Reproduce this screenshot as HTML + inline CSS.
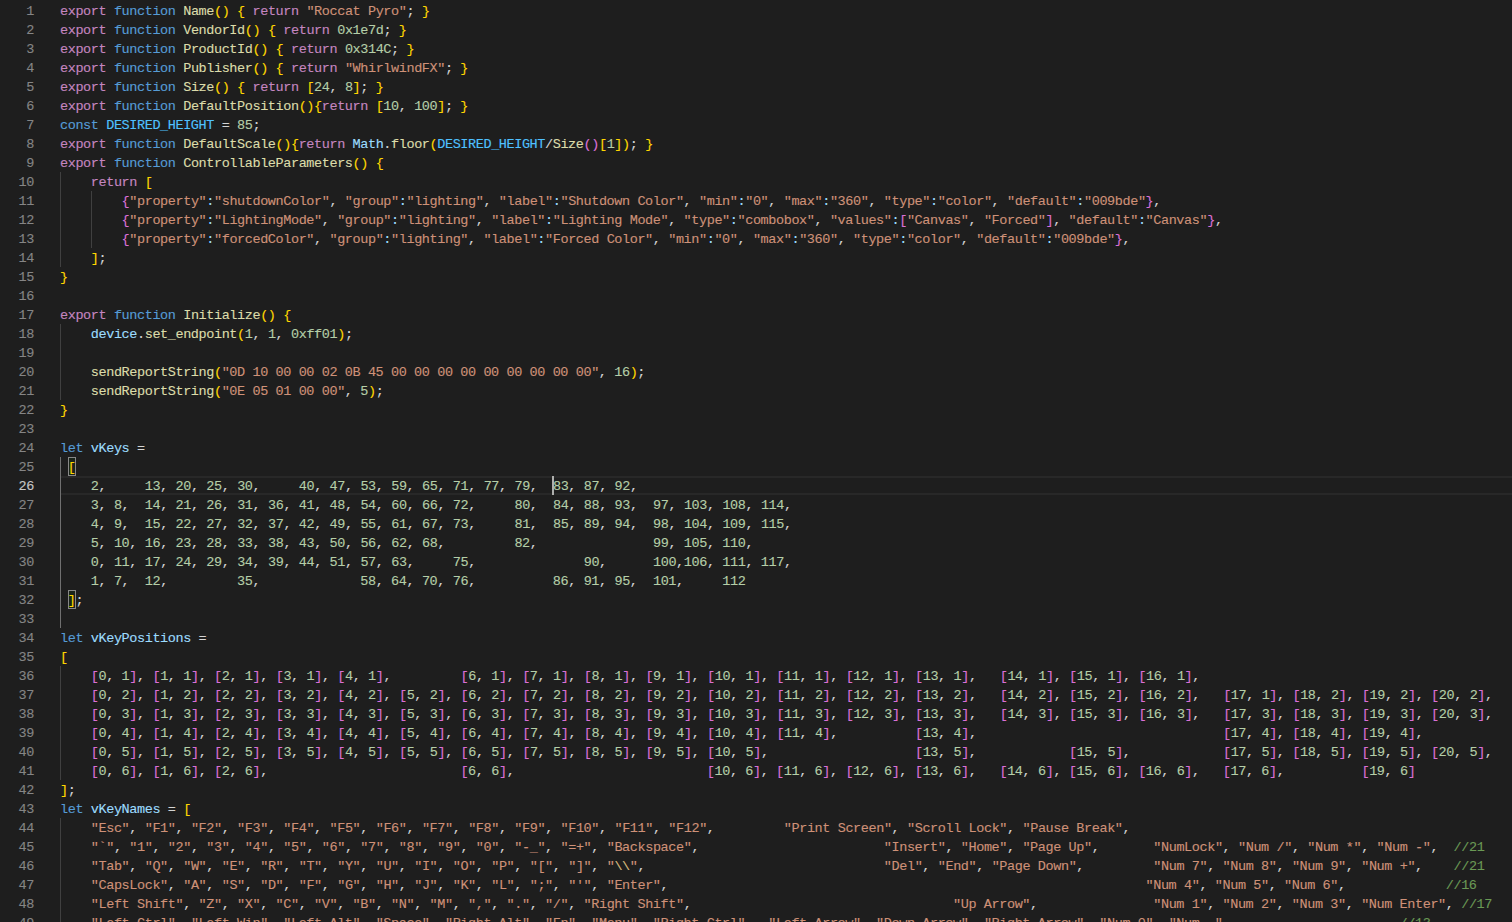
<!DOCTYPE html><html><head><meta charset="utf-8"><style>
*{margin:0;padding:0;box-sizing:border-box}
html,body{width:1512px;height:922px;overflow:hidden;background:#1e1e1e}
body{position:relative;font-family:"Liberation Mono",monospace}
.ln{position:absolute;left:0;width:34px;height:19px;text-align:right;color:#858585;font-size:13.5px;line-height:19px;letter-spacing:-0.404px;white-space:pre;-webkit-text-stroke:0.12px currentColor}
.ln.a{color:#c6c6c6}
.l{position:absolute;left:60px;height:19px;font-size:13.5px;line-height:19px;letter-spacing:-0.404px;white-space:pre;color:#d4d4d4;-webkit-text-stroke:0.12px currentColor}
i{font-style:normal}
.k{color:#c586c0}.s{color:#569cd6}.f{color:#dcdcaa}.t{color:#ce9178}.n{color:#b5cea8}
.v{color:#9cdcfe}.c{color:#4fc1ff}.p{color:#d4d4d4}.y{color:#ffd700}.o{color:#da70d6}.g{color:#6a9955}.e{color:#d7ba7d}
.gd{position:absolute;width:1px;background:#404040}
.gd.a{background:#707070}
.hl{position:absolute;left:61px;right:0;height:19px;border-top:2px solid #282828;border-bottom:2px solid #282828}
.bm{position:absolute;width:8px;height:19px;border:1px solid #888888;background:rgba(0,100,0,0.1)}
.cur{position:absolute;width:2px;height:19px;background:#aeafad}
</style></head><body>
<div class="hl" style="top:476px"></div>
<div class="gd" style="left:60px;top:172px;height:95px"></div>
<div class="gd" style="left:91px;top:191px;height:57px"></div>
<div class="gd" style="left:60px;top:324px;height:76px"></div>
<div class="gd a" style="left:60px;top:457px;height:171px"></div>
<div class="gd" style="left:60px;top:666px;height:114px"></div>
<div class="gd" style="left:60px;top:818px;height:114px"></div>
<div class="bm" style="left:68px;top:457px"></div>
<div class="bm" style="left:68px;top:590px"></div>
<div class="ln" style="top:1.80px">1</div>
<div class="l" style="top:1.80px"><i class="k">export</i> <i class="s">function</i> <i class="f">Name</i><i class="y">()</i> <i class="y">{</i> <i class="k">return</i> <i class="t">"Roccat Pyro"</i><i class="p">; </i><i class="y">}</i></div>
<div class="ln" style="top:20.80px">2</div>
<div class="l" style="top:20.80px"><i class="k">export</i> <i class="s">function</i> <i class="f">VendorId</i><i class="y">()</i> <i class="y">{</i> <i class="k">return</i> <i class="n">0x1e7d</i><i class="p">; </i><i class="y">}</i></div>
<div class="ln" style="top:39.80px">3</div>
<div class="l" style="top:39.80px"><i class="k">export</i> <i class="s">function</i> <i class="f">ProductId</i><i class="y">()</i> <i class="y">{</i> <i class="k">return</i> <i class="n">0x314C</i><i class="p">; </i><i class="y">}</i></div>
<div class="ln" style="top:58.80px">4</div>
<div class="l" style="top:58.80px"><i class="k">export</i> <i class="s">function</i> <i class="f">Publisher</i><i class="y">()</i> <i class="y">{</i> <i class="k">return</i> <i class="t">"WhirlwindFX"</i><i class="p">; </i><i class="y">}</i></div>
<div class="ln" style="top:77.80px">5</div>
<div class="l" style="top:77.80px"><i class="k">export</i> <i class="s">function</i> <i class="f">Size</i><i class="y">()</i> <i class="y">{</i> <i class="k">return</i> <i class="y">[</i><i class="n">24</i><i class="p">, </i><i class="n">8</i><i class="y">]</i><i class="p">; </i><i class="y">}</i></div>
<div class="ln" style="top:96.80px">6</div>
<div class="l" style="top:96.80px"><i class="k">export</i> <i class="s">function</i> <i class="f">DefaultPosition</i><i class="y">(){</i><i class="k">return</i> <i class="y">[</i><i class="n">10</i><i class="p">, </i><i class="n">100</i><i class="y">]</i><i class="p">; </i><i class="y">}</i></div>
<div class="ln" style="top:115.80px">7</div>
<div class="l" style="top:115.80px"><i class="s">const</i> <i class="c">DESIRED_HEIGHT</i><i class="p"> = </i><i class="n">85</i><i class="p">;</i></div>
<div class="ln" style="top:134.80px">8</div>
<div class="l" style="top:134.80px"><i class="k">export</i> <i class="s">function</i> <i class="f">DefaultScale</i><i class="y">(){</i><i class="k">return</i> <i class="v">Math</i><i class="p">.</i><i class="f">floor</i><i class="y">(</i><i class="c">DESIRED_HEIGHT</i><i class="p">/</i><i class="f">Size</i><i class="o">()</i><i class="y">[</i><i class="n">1</i><i class="y">])</i><i class="p">; </i><i class="y">}</i></div>
<div class="ln" style="top:153.80px">9</div>
<div class="l" style="top:153.80px"><i class="k">export</i> <i class="s">function</i> <i class="f">ControllableParameters</i><i class="y">()</i> <i class="y">{</i></div>
<div class="ln" style="top:172.80px">10</div>
<div class="l" style="top:172.80px">    <i class="k">return</i> <i class="y">[</i></div>
<div class="ln" style="top:191.80px">11</div>
<div class="l" style="top:191.80px">        <i class="o">{</i><i class="t">"property"</i><i class="v">:</i><i class="t">"shutdownColor"</i><i class="p">, </i><i class="t">"group"</i><i class="v">:</i><i class="t">"lighting"</i><i class="p">, </i><i class="t">"label"</i><i class="v">:</i><i class="t">"Shutdown Color"</i><i class="p">, </i><i class="t">"min"</i><i class="v">:</i><i class="t">"0"</i><i class="p">, </i><i class="t">"max"</i><i class="v">:</i><i class="t">"360"</i><i class="p">, </i><i class="t">"type"</i><i class="v">:</i><i class="t">"color"</i><i class="p">, </i><i class="t">"default"</i><i class="v">:</i><i class="t">"009bde"</i><i class="o">}</i><i class="p">,</i></div>
<div class="ln" style="top:210.80px">12</div>
<div class="l" style="top:210.80px">        <i class="o">{</i><i class="t">"property"</i><i class="v">:</i><i class="t">"LightingMode"</i><i class="p">, </i><i class="t">"group"</i><i class="v">:</i><i class="t">"lighting"</i><i class="p">, </i><i class="t">"label"</i><i class="v">:</i><i class="t">"Lighting Mode"</i><i class="p">, </i><i class="t">"type"</i><i class="v">:</i><i class="t">"combobox"</i><i class="p">, </i><i class="t">"values"</i><i class="v">:</i><i class="o">[</i><i class="t">"Canvas"</i><i class="p">, </i><i class="t">"Forced"</i><i class="o">]</i><i class="p">, </i><i class="t">"default"</i><i class="v">:</i><i class="t">"Canvas"</i><i class="o">}</i><i class="p">,</i></div>
<div class="ln" style="top:229.80px">13</div>
<div class="l" style="top:229.80px">        <i class="o">{</i><i class="t">"property"</i><i class="v">:</i><i class="t">"forcedColor"</i><i class="p">, </i><i class="t">"group"</i><i class="v">:</i><i class="t">"lighting"</i><i class="p">, </i><i class="t">"label"</i><i class="v">:</i><i class="t">"Forced Color"</i><i class="p">, </i><i class="t">"min"</i><i class="v">:</i><i class="t">"0"</i><i class="p">, </i><i class="t">"max"</i><i class="v">:</i><i class="t">"360"</i><i class="p">, </i><i class="t">"type"</i><i class="v">:</i><i class="t">"color"</i><i class="p">, </i><i class="t">"default"</i><i class="v">:</i><i class="t">"009bde"</i><i class="o">}</i><i class="p">,</i></div>
<div class="ln" style="top:248.80px">14</div>
<div class="l" style="top:248.80px">    <i class="y">]</i><i class="p">;</i></div>
<div class="ln" style="top:267.80px">15</div>
<div class="l" style="top:267.80px"><i class="y">}</i></div>
<div class="ln" style="top:286.80px">16</div>
<div class="ln" style="top:305.80px">17</div>
<div class="l" style="top:305.80px"><i class="k">export</i> <i class="s">function</i> <i class="f">Initialize</i><i class="y">()</i> <i class="y">{</i></div>
<div class="ln" style="top:324.80px">18</div>
<div class="l" style="top:324.80px">    <i class="v">device</i><i class="p">.</i><i class="f">set_endpoint</i><i class="y">(</i><i class="n">1</i><i class="p">, </i><i class="n">1</i><i class="p">, </i><i class="n">0xff01</i><i class="y">)</i><i class="p">;</i></div>
<div class="ln" style="top:343.80px">19</div>
<div class="ln" style="top:362.80px">20</div>
<div class="l" style="top:362.80px">    <i class="f">sendReportString</i><i class="y">(</i><i class="t">"0D 10 00 00 02 0B 45 00 00 00 00 00 00 00 00 00"</i><i class="p">, </i><i class="n">16</i><i class="y">)</i><i class="p">;</i></div>
<div class="ln" style="top:381.80px">21</div>
<div class="l" style="top:381.80px">    <i class="f">sendReportString</i><i class="y">(</i><i class="t">"0E 05 01 00 00"</i><i class="p">, </i><i class="n">5</i><i class="y">)</i><i class="p">;</i></div>
<div class="ln" style="top:400.80px">22</div>
<div class="l" style="top:400.80px"><i class="y">}</i></div>
<div class="ln" style="top:419.80px">23</div>
<div class="ln" style="top:438.80px">24</div>
<div class="l" style="top:438.80px"><i class="s">let</i> <i class="v">vKeys</i><i class="p"> =</i></div>
<div class="ln" style="top:457.80px">25</div>
<div class="l" style="top:457.80px"> <i class="y">[</i></div>
<div class="ln a" style="top:476.80px">26</div>
<div class="l" style="top:476.80px">    <i class="n">2</i><i class="p">,</i>     <i class="n">13</i><i class="p">,</i> <i class="n">20</i><i class="p">,</i> <i class="n">25</i><i class="p">,</i> <i class="n">30</i><i class="p">,</i>     <i class="n">40</i><i class="p">,</i> <i class="n">47</i><i class="p">,</i> <i class="n">53</i><i class="p">,</i> <i class="n">59</i><i class="p">,</i> <i class="n">65</i><i class="p">,</i> <i class="n">71</i><i class="p">,</i> <i class="n">77</i><i class="p">,</i> <i class="n">79</i><i class="p">,</i>  <i class="n">83</i><i class="p">,</i> <i class="n">87</i><i class="p">,</i> <i class="n">92</i><i class="p">,</i></div>
<div class="ln" style="top:495.80px">27</div>
<div class="l" style="top:495.80px">    <i class="n">3</i><i class="p">,</i> <i class="n">8</i><i class="p">,</i>  <i class="n">14</i><i class="p">,</i> <i class="n">21</i><i class="p">,</i> <i class="n">26</i><i class="p">,</i> <i class="n">31</i><i class="p">,</i> <i class="n">36</i><i class="p">,</i> <i class="n">41</i><i class="p">,</i> <i class="n">48</i><i class="p">,</i> <i class="n">54</i><i class="p">,</i> <i class="n">60</i><i class="p">,</i> <i class="n">66</i><i class="p">,</i> <i class="n">72</i><i class="p">,</i>     <i class="n">80</i><i class="p">,</i>  <i class="n">84</i><i class="p">,</i> <i class="n">88</i><i class="p">,</i> <i class="n">93</i><i class="p">,</i>  <i class="n">97</i><i class="p">,</i> <i class="n">103</i><i class="p">,</i> <i class="n">108</i><i class="p">,</i> <i class="n">114</i><i class="p">,</i></div>
<div class="ln" style="top:514.80px">28</div>
<div class="l" style="top:514.80px">    <i class="n">4</i><i class="p">,</i> <i class="n">9</i><i class="p">,</i>  <i class="n">15</i><i class="p">,</i> <i class="n">22</i><i class="p">,</i> <i class="n">27</i><i class="p">,</i> <i class="n">32</i><i class="p">,</i> <i class="n">37</i><i class="p">,</i> <i class="n">42</i><i class="p">,</i> <i class="n">49</i><i class="p">,</i> <i class="n">55</i><i class="p">,</i> <i class="n">61</i><i class="p">,</i> <i class="n">67</i><i class="p">,</i> <i class="n">73</i><i class="p">,</i>     <i class="n">81</i><i class="p">,</i>  <i class="n">85</i><i class="p">,</i> <i class="n">89</i><i class="p">,</i> <i class="n">94</i><i class="p">,</i>  <i class="n">98</i><i class="p">,</i> <i class="n">104</i><i class="p">,</i> <i class="n">109</i><i class="p">,</i> <i class="n">115</i><i class="p">,</i></div>
<div class="ln" style="top:533.80px">29</div>
<div class="l" style="top:533.80px">    <i class="n">5</i><i class="p">,</i> <i class="n">10</i><i class="p">,</i> <i class="n">16</i><i class="p">,</i> <i class="n">23</i><i class="p">,</i> <i class="n">28</i><i class="p">,</i> <i class="n">33</i><i class="p">,</i> <i class="n">38</i><i class="p">,</i> <i class="n">43</i><i class="p">,</i> <i class="n">50</i><i class="p">,</i> <i class="n">56</i><i class="p">,</i> <i class="n">62</i><i class="p">,</i> <i class="n">68</i><i class="p">,</i>         <i class="n">82</i><i class="p">,</i>               <i class="n">99</i><i class="p">,</i> <i class="n">105</i><i class="p">,</i> <i class="n">110</i><i class="p">,</i></div>
<div class="ln" style="top:552.80px">30</div>
<div class="l" style="top:552.80px">    <i class="n">0</i><i class="p">,</i> <i class="n">11</i><i class="p">,</i> <i class="n">17</i><i class="p">,</i> <i class="n">24</i><i class="p">,</i> <i class="n">29</i><i class="p">,</i> <i class="n">34</i><i class="p">,</i> <i class="n">39</i><i class="p">,</i> <i class="n">44</i><i class="p">,</i> <i class="n">51</i><i class="p">,</i> <i class="n">57</i><i class="p">,</i> <i class="n">63</i><i class="p">,</i>     <i class="n">75</i><i class="p">,</i>              <i class="n">90</i><i class="p">,</i>      <i class="n">100</i><i class="p">,</i><i class="n">106</i><i class="p">,</i> <i class="n">111</i><i class="p">,</i> <i class="n">117</i><i class="p">,</i></div>
<div class="ln" style="top:571.80px">31</div>
<div class="l" style="top:571.80px">    <i class="n">1</i><i class="p">,</i> <i class="n">7</i><i class="p">,</i>  <i class="n">12</i><i class="p">,</i>         <i class="n">35</i><i class="p">,</i>             <i class="n">58</i><i class="p">,</i> <i class="n">64</i><i class="p">,</i> <i class="n">70</i><i class="p">,</i> <i class="n">76</i><i class="p">,</i>          <i class="n">86</i><i class="p">,</i> <i class="n">91</i><i class="p">,</i> <i class="n">95</i><i class="p">,</i>  <i class="n">101</i><i class="p">,</i>     <i class="n">112</i></div>
<div class="ln" style="top:590.80px">32</div>
<div class="l" style="top:590.80px"> <i class="y">]</i><i class="p">;</i></div>
<div class="ln" style="top:609.80px">33</div>
<div class="ln" style="top:628.80px">34</div>
<div class="l" style="top:628.80px"><i class="s">let</i> <i class="v">vKeyPositions</i><i class="p"> =</i></div>
<div class="ln" style="top:647.80px">35</div>
<div class="l" style="top:647.80px"><i class="y">[</i></div>
<div class="ln" style="top:666.80px">36</div>
<div class="l" style="top:666.80px">    <i class="o">[</i><i class="n">0</i><i class="p">, </i><i class="n">1</i><i class="o">]</i><i class="p">,</i> <i class="o">[</i><i class="n">1</i><i class="p">, </i><i class="n">1</i><i class="o">]</i><i class="p">,</i> <i class="o">[</i><i class="n">2</i><i class="p">, </i><i class="n">1</i><i class="o">]</i><i class="p">,</i> <i class="o">[</i><i class="n">3</i><i class="p">, </i><i class="n">1</i><i class="o">]</i><i class="p">,</i> <i class="o">[</i><i class="n">4</i><i class="p">, </i><i class="n">1</i><i class="o">]</i><i class="p">,</i>         <i class="o">[</i><i class="n">6</i><i class="p">, </i><i class="n">1</i><i class="o">]</i><i class="p">,</i> <i class="o">[</i><i class="n">7</i><i class="p">, </i><i class="n">1</i><i class="o">]</i><i class="p">,</i> <i class="o">[</i><i class="n">8</i><i class="p">, </i><i class="n">1</i><i class="o">]</i><i class="p">,</i> <i class="o">[</i><i class="n">9</i><i class="p">, </i><i class="n">1</i><i class="o">]</i><i class="p">,</i> <i class="o">[</i><i class="n">10</i><i class="p">, </i><i class="n">1</i><i class="o">]</i><i class="p">,</i> <i class="o">[</i><i class="n">11</i><i class="p">, </i><i class="n">1</i><i class="o">]</i><i class="p">,</i> <i class="o">[</i><i class="n">12</i><i class="p">, </i><i class="n">1</i><i class="o">]</i><i class="p">,</i> <i class="o">[</i><i class="n">13</i><i class="p">, </i><i class="n">1</i><i class="o">]</i><i class="p">,</i>   <i class="o">[</i><i class="n">14</i><i class="p">, </i><i class="n">1</i><i class="o">]</i><i class="p">,</i> <i class="o">[</i><i class="n">15</i><i class="p">, </i><i class="n">1</i><i class="o">]</i><i class="p">,</i> <i class="o">[</i><i class="n">16</i><i class="p">, </i><i class="n">1</i><i class="o">]</i><i class="p">,</i></div>
<div class="ln" style="top:685.80px">37</div>
<div class="l" style="top:685.80px">    <i class="o">[</i><i class="n">0</i><i class="p">, </i><i class="n">2</i><i class="o">]</i><i class="p">,</i> <i class="o">[</i><i class="n">1</i><i class="p">, </i><i class="n">2</i><i class="o">]</i><i class="p">,</i> <i class="o">[</i><i class="n">2</i><i class="p">, </i><i class="n">2</i><i class="o">]</i><i class="p">,</i> <i class="o">[</i><i class="n">3</i><i class="p">, </i><i class="n">2</i><i class="o">]</i><i class="p">,</i> <i class="o">[</i><i class="n">4</i><i class="p">, </i><i class="n">2</i><i class="o">]</i><i class="p">,</i> <i class="o">[</i><i class="n">5</i><i class="p">, </i><i class="n">2</i><i class="o">]</i><i class="p">,</i> <i class="o">[</i><i class="n">6</i><i class="p">, </i><i class="n">2</i><i class="o">]</i><i class="p">,</i> <i class="o">[</i><i class="n">7</i><i class="p">, </i><i class="n">2</i><i class="o">]</i><i class="p">,</i> <i class="o">[</i><i class="n">8</i><i class="p">, </i><i class="n">2</i><i class="o">]</i><i class="p">,</i> <i class="o">[</i><i class="n">9</i><i class="p">, </i><i class="n">2</i><i class="o">]</i><i class="p">,</i> <i class="o">[</i><i class="n">10</i><i class="p">, </i><i class="n">2</i><i class="o">]</i><i class="p">,</i> <i class="o">[</i><i class="n">11</i><i class="p">, </i><i class="n">2</i><i class="o">]</i><i class="p">,</i> <i class="o">[</i><i class="n">12</i><i class="p">, </i><i class="n">2</i><i class="o">]</i><i class="p">,</i> <i class="o">[</i><i class="n">13</i><i class="p">, </i><i class="n">2</i><i class="o">]</i><i class="p">,</i>   <i class="o">[</i><i class="n">14</i><i class="p">, </i><i class="n">2</i><i class="o">]</i><i class="p">,</i> <i class="o">[</i><i class="n">15</i><i class="p">, </i><i class="n">2</i><i class="o">]</i><i class="p">,</i> <i class="o">[</i><i class="n">16</i><i class="p">, </i><i class="n">2</i><i class="o">]</i><i class="p">,</i>   <i class="o">[</i><i class="n">17</i><i class="p">, </i><i class="n">1</i><i class="o">]</i><i class="p">,</i> <i class="o">[</i><i class="n">18</i><i class="p">, </i><i class="n">2</i><i class="o">]</i><i class="p">,</i> <i class="o">[</i><i class="n">19</i><i class="p">, </i><i class="n">2</i><i class="o">]</i><i class="p">,</i> <i class="o">[</i><i class="n">20</i><i class="p">, </i><i class="n">2</i><i class="o">]</i><i class="p">,</i></div>
<div class="ln" style="top:704.80px">38</div>
<div class="l" style="top:704.80px">    <i class="o">[</i><i class="n">0</i><i class="p">, </i><i class="n">3</i><i class="o">]</i><i class="p">,</i> <i class="o">[</i><i class="n">1</i><i class="p">, </i><i class="n">3</i><i class="o">]</i><i class="p">,</i> <i class="o">[</i><i class="n">2</i><i class="p">, </i><i class="n">3</i><i class="o">]</i><i class="p">,</i> <i class="o">[</i><i class="n">3</i><i class="p">, </i><i class="n">3</i><i class="o">]</i><i class="p">,</i> <i class="o">[</i><i class="n">4</i><i class="p">, </i><i class="n">3</i><i class="o">]</i><i class="p">,</i> <i class="o">[</i><i class="n">5</i><i class="p">, </i><i class="n">3</i><i class="o">]</i><i class="p">,</i> <i class="o">[</i><i class="n">6</i><i class="p">, </i><i class="n">3</i><i class="o">]</i><i class="p">,</i> <i class="o">[</i><i class="n">7</i><i class="p">, </i><i class="n">3</i><i class="o">]</i><i class="p">,</i> <i class="o">[</i><i class="n">8</i><i class="p">, </i><i class="n">3</i><i class="o">]</i><i class="p">,</i> <i class="o">[</i><i class="n">9</i><i class="p">, </i><i class="n">3</i><i class="o">]</i><i class="p">,</i> <i class="o">[</i><i class="n">10</i><i class="p">, </i><i class="n">3</i><i class="o">]</i><i class="p">,</i> <i class="o">[</i><i class="n">11</i><i class="p">, </i><i class="n">3</i><i class="o">]</i><i class="p">,</i> <i class="o">[</i><i class="n">12</i><i class="p">, </i><i class="n">3</i><i class="o">]</i><i class="p">,</i> <i class="o">[</i><i class="n">13</i><i class="p">, </i><i class="n">3</i><i class="o">]</i><i class="p">,</i>   <i class="o">[</i><i class="n">14</i><i class="p">, </i><i class="n">3</i><i class="o">]</i><i class="p">,</i> <i class="o">[</i><i class="n">15</i><i class="p">, </i><i class="n">3</i><i class="o">]</i><i class="p">,</i> <i class="o">[</i><i class="n">16</i><i class="p">, </i><i class="n">3</i><i class="o">]</i><i class="p">,</i>   <i class="o">[</i><i class="n">17</i><i class="p">, </i><i class="n">3</i><i class="o">]</i><i class="p">,</i> <i class="o">[</i><i class="n">18</i><i class="p">, </i><i class="n">3</i><i class="o">]</i><i class="p">,</i> <i class="o">[</i><i class="n">19</i><i class="p">, </i><i class="n">3</i><i class="o">]</i><i class="p">,</i> <i class="o">[</i><i class="n">20</i><i class="p">, </i><i class="n">3</i><i class="o">]</i><i class="p">,</i></div>
<div class="ln" style="top:723.80px">39</div>
<div class="l" style="top:723.80px">    <i class="o">[</i><i class="n">0</i><i class="p">, </i><i class="n">4</i><i class="o">]</i><i class="p">,</i> <i class="o">[</i><i class="n">1</i><i class="p">, </i><i class="n">4</i><i class="o">]</i><i class="p">,</i> <i class="o">[</i><i class="n">2</i><i class="p">, </i><i class="n">4</i><i class="o">]</i><i class="p">,</i> <i class="o">[</i><i class="n">3</i><i class="p">, </i><i class="n">4</i><i class="o">]</i><i class="p">,</i> <i class="o">[</i><i class="n">4</i><i class="p">, </i><i class="n">4</i><i class="o">]</i><i class="p">,</i> <i class="o">[</i><i class="n">5</i><i class="p">, </i><i class="n">4</i><i class="o">]</i><i class="p">,</i> <i class="o">[</i><i class="n">6</i><i class="p">, </i><i class="n">4</i><i class="o">]</i><i class="p">,</i> <i class="o">[</i><i class="n">7</i><i class="p">, </i><i class="n">4</i><i class="o">]</i><i class="p">,</i> <i class="o">[</i><i class="n">8</i><i class="p">, </i><i class="n">4</i><i class="o">]</i><i class="p">,</i> <i class="o">[</i><i class="n">9</i><i class="p">, </i><i class="n">4</i><i class="o">]</i><i class="p">,</i> <i class="o">[</i><i class="n">10</i><i class="p">, </i><i class="n">4</i><i class="o">]</i><i class="p">,</i> <i class="o">[</i><i class="n">11</i><i class="p">, </i><i class="n">4</i><i class="o">]</i><i class="p">,</i>          <i class="o">[</i><i class="n">13</i><i class="p">, </i><i class="n">4</i><i class="o">]</i><i class="p">,</i>                                <i class="o">[</i><i class="n">17</i><i class="p">, </i><i class="n">4</i><i class="o">]</i><i class="p">,</i> <i class="o">[</i><i class="n">18</i><i class="p">, </i><i class="n">4</i><i class="o">]</i><i class="p">,</i> <i class="o">[</i><i class="n">19</i><i class="p">, </i><i class="n">4</i><i class="o">]</i><i class="p">,</i></div>
<div class="ln" style="top:742.80px">40</div>
<div class="l" style="top:742.80px">    <i class="o">[</i><i class="n">0</i><i class="p">, </i><i class="n">5</i><i class="o">]</i><i class="p">,</i> <i class="o">[</i><i class="n">1</i><i class="p">, </i><i class="n">5</i><i class="o">]</i><i class="p">,</i> <i class="o">[</i><i class="n">2</i><i class="p">, </i><i class="n">5</i><i class="o">]</i><i class="p">,</i> <i class="o">[</i><i class="n">3</i><i class="p">, </i><i class="n">5</i><i class="o">]</i><i class="p">,</i> <i class="o">[</i><i class="n">4</i><i class="p">, </i><i class="n">5</i><i class="o">]</i><i class="p">,</i> <i class="o">[</i><i class="n">5</i><i class="p">, </i><i class="n">5</i><i class="o">]</i><i class="p">,</i> <i class="o">[</i><i class="n">6</i><i class="p">, </i><i class="n">5</i><i class="o">]</i><i class="p">,</i> <i class="o">[</i><i class="n">7</i><i class="p">, </i><i class="n">5</i><i class="o">]</i><i class="p">,</i> <i class="o">[</i><i class="n">8</i><i class="p">, </i><i class="n">5</i><i class="o">]</i><i class="p">,</i> <i class="o">[</i><i class="n">9</i><i class="p">, </i><i class="n">5</i><i class="o">]</i><i class="p">,</i> <i class="o">[</i><i class="n">10</i><i class="p">, </i><i class="n">5</i><i class="o">]</i><i class="p">,</i>                   <i class="o">[</i><i class="n">13</i><i class="p">, </i><i class="n">5</i><i class="o">]</i><i class="p">,</i>            <i class="o">[</i><i class="n">15</i><i class="p">, </i><i class="n">5</i><i class="o">]</i><i class="p">,</i>            <i class="o">[</i><i class="n">17</i><i class="p">, </i><i class="n">5</i><i class="o">]</i><i class="p">,</i> <i class="o">[</i><i class="n">18</i><i class="p">, </i><i class="n">5</i><i class="o">]</i><i class="p">,</i> <i class="o">[</i><i class="n">19</i><i class="p">, </i><i class="n">5</i><i class="o">]</i><i class="p">,</i> <i class="o">[</i><i class="n">20</i><i class="p">, </i><i class="n">5</i><i class="o">]</i><i class="p">,</i></div>
<div class="ln" style="top:761.80px">41</div>
<div class="l" style="top:761.80px">    <i class="o">[</i><i class="n">0</i><i class="p">, </i><i class="n">6</i><i class="o">]</i><i class="p">,</i> <i class="o">[</i><i class="n">1</i><i class="p">, </i><i class="n">6</i><i class="o">]</i><i class="p">,</i> <i class="o">[</i><i class="n">2</i><i class="p">, </i><i class="n">6</i><i class="o">]</i><i class="p">,</i>                         <i class="o">[</i><i class="n">6</i><i class="p">, </i><i class="n">6</i><i class="o">]</i><i class="p">,</i>                         <i class="o">[</i><i class="n">10</i><i class="p">, </i><i class="n">6</i><i class="o">]</i><i class="p">,</i> <i class="o">[</i><i class="n">11</i><i class="p">, </i><i class="n">6</i><i class="o">]</i><i class="p">,</i> <i class="o">[</i><i class="n">12</i><i class="p">, </i><i class="n">6</i><i class="o">]</i><i class="p">,</i> <i class="o">[</i><i class="n">13</i><i class="p">, </i><i class="n">6</i><i class="o">]</i><i class="p">,</i>   <i class="o">[</i><i class="n">14</i><i class="p">, </i><i class="n">6</i><i class="o">]</i><i class="p">,</i> <i class="o">[</i><i class="n">15</i><i class="p">, </i><i class="n">6</i><i class="o">]</i><i class="p">,</i> <i class="o">[</i><i class="n">16</i><i class="p">, </i><i class="n">6</i><i class="o">]</i><i class="p">,</i>   <i class="o">[</i><i class="n">17</i><i class="p">, </i><i class="n">6</i><i class="o">]</i><i class="p">,</i>          <i class="o">[</i><i class="n">19</i><i class="p">, </i><i class="n">6</i><i class="o">]</i></div>
<div class="ln" style="top:780.80px">42</div>
<div class="l" style="top:780.80px"><i class="y">]</i><i class="p">;</i></div>
<div class="ln" style="top:799.80px">43</div>
<div class="l" style="top:799.80px"><i class="s">let</i> <i class="v">vKeyNames</i><i class="p"> = </i><i class="y">[</i></div>
<div class="ln" style="top:818.80px">44</div>
<div class="l" style="top:818.80px">    <i class="t">"Esc"</i><i class="p">,</i> <i class="t">"F1"</i><i class="p">,</i> <i class="t">"F2"</i><i class="p">,</i> <i class="t">"F3"</i><i class="p">,</i> <i class="t">"F4"</i><i class="p">,</i> <i class="t">"F5"</i><i class="p">,</i> <i class="t">"F6"</i><i class="p">,</i> <i class="t">"F7"</i><i class="p">,</i> <i class="t">"F8"</i><i class="p">,</i> <i class="t">"F9"</i><i class="p">,</i> <i class="t">"F10"</i><i class="p">,</i> <i class="t">"F11"</i><i class="p">,</i> <i class="t">"F12"</i><i class="p">,</i>         <i class="t">"Print Screen"</i><i class="p">,</i> <i class="t">"Scroll Lock"</i><i class="p">,</i> <i class="t">"Pause Break"</i><i class="p">,</i></div>
<div class="ln" style="top:837.80px">45</div>
<div class="l" style="top:837.80px">    <i class="t">"`"</i><i class="p">,</i> <i class="t">"1"</i><i class="p">,</i> <i class="t">"2"</i><i class="p">,</i> <i class="t">"3"</i><i class="p">,</i> <i class="t">"4"</i><i class="p">,</i> <i class="t">"5"</i><i class="p">,</i> <i class="t">"6"</i><i class="p">,</i> <i class="t">"7"</i><i class="p">,</i> <i class="t">"8"</i><i class="p">,</i> <i class="t">"9"</i><i class="p">,</i> <i class="t">"0"</i><i class="p">,</i> <i class="t">"-_"</i><i class="p">,</i> <i class="t">"=+"</i><i class="p">,</i> <i class="t">"Backspace"</i><i class="p">,</i>                        <i class="t">"Insert"</i><i class="p">,</i> <i class="t">"Home"</i><i class="p">,</i> <i class="t">"Page Up"</i><i class="p">,</i>       <i class="t">"NumLock"</i><i class="p">,</i> <i class="t">"Num /"</i><i class="p">,</i> <i class="t">"Num *"</i><i class="p">,</i> <i class="t">"Num -"</i><i class="p">,</i>  <i class="g">//21</i></div>
<div class="ln" style="top:856.80px">46</div>
<div class="l" style="top:856.80px">    <i class="t">"Tab"</i><i class="p">,</i> <i class="t">"Q"</i><i class="p">,</i> <i class="t">"W"</i><i class="p">,</i> <i class="t">"E"</i><i class="p">,</i> <i class="t">"R"</i><i class="p">,</i> <i class="t">"T"</i><i class="p">,</i> <i class="t">"Y"</i><i class="p">,</i> <i class="t">"U"</i><i class="p">,</i> <i class="t">"I"</i><i class="p">,</i> <i class="t">"O"</i><i class="p">,</i> <i class="t">"P"</i><i class="p">,</i> <i class="t">"["</i><i class="p">,</i> <i class="t">"]"</i><i class="p">,</i> <i class="t">"</i><i class="e">\\</i><i class="t">"</i><i class="p">,</i>                               <i class="t">"Del"</i><i class="p">,</i> <i class="t">"End"</i><i class="p">,</i> <i class="t">"Page Down"</i><i class="p">,</i>         <i class="t">"Num 7"</i><i class="p">,</i> <i class="t">"Num 8"</i><i class="p">,</i> <i class="t">"Num 9"</i><i class="p">,</i> <i class="t">"Num +"</i><i class="p">,</i>    <i class="g">//21</i></div>
<div class="ln" style="top:875.80px">47</div>
<div class="l" style="top:875.80px">    <i class="t">"CapsLock"</i><i class="p">,</i> <i class="t">"A"</i><i class="p">,</i> <i class="t">"S"</i><i class="p">,</i> <i class="t">"D"</i><i class="p">,</i> <i class="t">"F"</i><i class="p">,</i> <i class="t">"G"</i><i class="p">,</i> <i class="t">"H"</i><i class="p">,</i> <i class="t">"J"</i><i class="p">,</i> <i class="t">"K"</i><i class="p">,</i> <i class="t">"L"</i><i class="p">,</i> <i class="t">";"</i><i class="p">,</i> <i class="t">"'"</i><i class="p">,</i> <i class="t">"Enter"</i><i class="p">,</i>                                                              <i class="t">"Num 4"</i><i class="p">,</i> <i class="t">"Num 5"</i><i class="p">,</i> <i class="t">"Num 6"</i><i class="p">,</i>             <i class="g">//16</i></div>
<div class="ln" style="top:894.80px">48</div>
<div class="l" style="top:894.80px">    <i class="t">"Left Shift"</i><i class="p">,</i> <i class="t">"Z"</i><i class="p">,</i> <i class="t">"X"</i><i class="p">,</i> <i class="t">"C"</i><i class="p">,</i> <i class="t">"V"</i><i class="p">,</i> <i class="t">"B"</i><i class="p">,</i> <i class="t">"N"</i><i class="p">,</i> <i class="t">"M"</i><i class="p">,</i> <i class="t">","</i><i class="p">,</i> <i class="t">"."</i><i class="p">,</i> <i class="t">"/"</i><i class="p">,</i> <i class="t">"Right Shift"</i><i class="p">,</i>                                  <i class="t">"Up Arrow"</i><i class="p">,</i>               <i class="t">"Num 1"</i><i class="p">,</i> <i class="t">"Num 2"</i><i class="p">,</i> <i class="t">"Num 3"</i><i class="p">,</i> <i class="t">"Num Enter"</i><i class="p">,</i> <i class="g">//17</i></div>
<div class="ln" style="top:913.80px">49</div>
<div class="l" style="top:913.80px">    <i class="t">"Left Ctrl"</i><i class="p">,</i> <i class="t">"Left Win"</i><i class="p">,</i> <i class="t">"Left Alt"</i><i class="p">,</i> <i class="t">"Space"</i><i class="p">,</i> <i class="t">"Right Alt"</i><i class="p">,</i> <i class="t">"Fn"</i><i class="p">,</i> <i class="t">"Menu"</i><i class="p">,</i> <i class="t">"Right Ctrl"</i><i class="p">,</i>  <i class="t">"Left Arrow"</i><i class="p">,</i> <i class="t">"Down Arrow"</i><i class="p">,</i> <i class="t">"Right Arrow"</i><i class="p">,</i> <i class="t">"Num 0"</i><i class="p">,</i> <i class="t">"Num ."</i><i class="p">,</i>                      <i class="g">//13</i></div>
<div class="cur" style="left:552px;top:476px"></div>
</body></html>
